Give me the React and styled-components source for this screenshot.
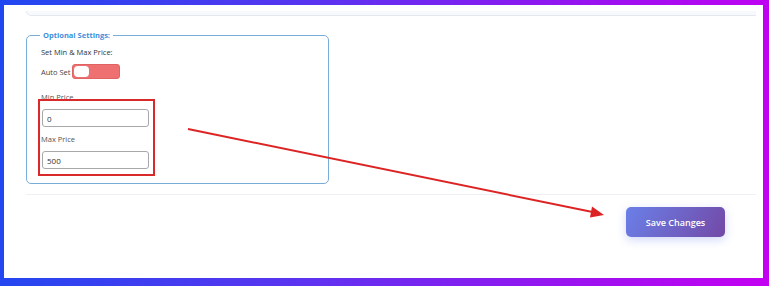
import React from "react";
import styled, { createGlobalStyle } from "styled-components";

const Global = createGlobalStyle`
  html, body { margin: 0; padding: 0; }
  body { font-family: "Open Sans", "Noto Sans", Arial, sans-serif; background: #fff; }
`;

const Frame = styled.div`
  position: relative;
  width: 769px;
  height: 286px;
  box-sizing: border-box;
  padding: 5px 6px 8px 4px;
  background: linear-gradient(95deg, #2048f0 0%, #5a34f0 40%, #9a12f0 75%, #c400f2 100%);
`;

const Panel = styled.div`
  height: 100%;
  box-sizing: border-box;
  border-style: solid;
  border-color: rgba(255, 255, 255, 0.55);
  border-width: 6px 7px 8px 7px;
  background: #fff;
  overflow: hidden;
  display: flex;
  flex-direction: column;
  padding-left: 15px;
`;

const PrevCard = styled.div`
  height: 4px;
  margin-right: -20px;
  border: 1px solid #e4e9f0;
  border-top: none;
  border-bottom-left-radius: 7px;
  background: #f7f9fc;
`;

const Fieldset = styled.fieldset`
  margin: 14px 0 0 0;
  padding: 0;
  width: 303px;
  box-sizing: border-box;
  border: 1px solid #78acd9;
  border-radius: 5px;
  min-width: 0;
`;

const Legend = styled.legend`
  margin-left: 13px;
  padding: 0 3px;
  font-size: 7.5px;
  line-height: 11px;
  font-weight: 700;
  color: #3d8fdc;
`;

const Body = styled.div`
  position: relative;
  padding: 5px 14px 14px 14px;
  display: flex;
  flex-direction: column;
  align-items: flex-start;
`;

const Heading = styled.div`
  font-size: 7.5px;
  line-height: 12px;
  font-weight: 500;
  color: #333;
`;

const AutoRow = styled.div`
  margin-top: 6px;
  display: flex;
  align-items: center;
  gap: 2px;
  font-size: 7.5px;
  color: #444;
`;

const Toggle = styled.div`
  width: 48px;
  height: 15px;
  box-sizing: border-box;
  border-radius: 3px;
  background: #ee7070;
  border: 1px solid #e06262;
  display: flex;
  align-items: center;
  padding-left: 1px;
`;

const Knob = styled.div`
  width: 15px;
  height: 11px;
  border-radius: 4px;
  background: #fff;
`;

const Label = styled.div`
  margin-top: ${(p) => p.$mt}px;
  font-size: 7.5px;
  line-height: 11px;
  color: #555;
`;

const Input = styled.div`
  margin-top: 6px;
  margin-left: 1px;
  width: 107px;
  height: 18px;
  box-sizing: border-box;
  border: 1px solid #a8a8a8;
  border-radius: 3px;
  padding-left: 4px;
  display: flex;
  align-items: center;
  font-size: 8px;
  color: #333;
`;

const Highlight = styled.div`
  position: absolute;
  left: 11px;
  top: 58px;
  width: 117px;
  height: 77px;
  box-sizing: border-box;
  border: 2px solid #d82a2a;
  pointer-events: none;
`;

const Divider = styled.div`
  margin-top: 10px;
  height: 1px;
  background: #eef0f3;
`;

const Footer = styled.div`
  display: flex;
  justify-content: flex-end;
  padding: 12px 31px 0 0;
`;

const SaveButton = styled.button`
  width: 99px;
  height: 30px;
  border: none;
  border-radius: 5px;
  background: linear-gradient(120deg, #6a80e8 0%, #7349a6 100%);
  box-shadow: 0 3px 10px rgba(102, 126, 234, 0.3);
  color: #fff;
  font-family: "Open Sans", "Noto Sans", Arial, sans-serif;
  font-size: 9px;
  font-weight: 600;
  padding: 0;
`;

const ArrowLayer = styled.svg`
  position: absolute;
  left: 0;
  top: 0;
  pointer-events: none;
`;

export default function App() {
  return (
    <>
      <Global />
      <Frame>
        <Panel>
          <PrevCard />
          <Fieldset>
            <Legend>Optional Settings:</Legend>
            <Body>
              <Heading>Set Min &amp; Max Price:</Heading>
              <AutoRow>
                Auto Set
                <Toggle>
                  <Knob />
                </Toggle>
              </AutoRow>
              <Label $mt={13}>Min Price</Label>
              <Input>0</Input>
              <Label $mt={7}>Max Price</Label>
              <Input>500</Input>
              <Highlight />
            </Body>
          </Fieldset>
          <Divider />
          <Footer>
            <SaveButton>Save Changes</SaveButton>
          </Footer>
        </Panel>
        <ArrowLayer width="769" height="286" viewBox="0 0 769 286">
          <line x1="188" y1="129" x2="595" y2="212.5" stroke="#dc2424" strokeWidth="2" />
          <polygon points="604,215 592,206.5 590,217.5" fill="#dc2424" />
        </ArrowLayer>
      </Frame>
    </>
  );
}
